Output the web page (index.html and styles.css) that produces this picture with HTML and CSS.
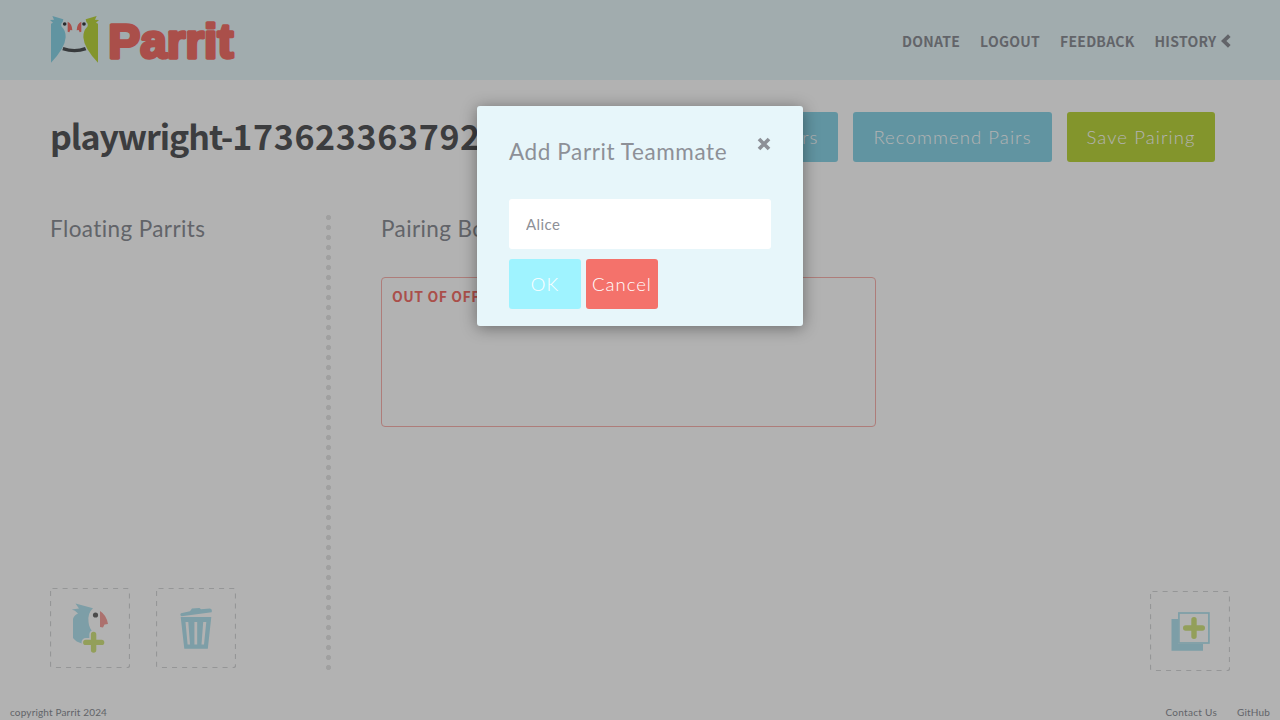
FILE: index.html
```html
<!DOCTYPE html>
<html lang="en">
<head>
<meta charset="utf-8">
<title>Parrit</title>
<link rel="stylesheet" href="styles.css">
</head>
<body>
<div class="app">
  <header class="header">
    <svg class="logo" viewBox="30 45 600 150" role="img" aria-label="Parrit">
      <path d="M37 48L70 58L68 66Q61 72 65 80Q78 92 77 112Q75 145 33 188V71L39 68L30 60L42 59Z" fill="#8bd5e7"/>
      <path d="M170 48L137 58L139 66Q146 72 142 80Q129 92 130 112Q132 145 174 188V71L168 68L177 60L165 59Z" fill="#bcd640"/>
      <path d="M70 141Q104 153 135 141L139 151Q104 163 67 151Z" fill="#505357"/>
      <path d="M83 65Q96 70 97 91L91 90L88 97L83 95Z" fill="#f4726b"/>
      <path d="M124 65Q111 70 110 91L116 90L119 97L124 95Z" fill="#f4726b"/>
      <circle cx="74" cy="72" r="5.5" fill="#3b3d40"/>
      <circle cx="132" cy="72" r="5.5" fill="#3b3d40"/>
      <text class="wordmark" x="205" y="175" textLength="375" lengthAdjust="spacingAndGlyphs">Parrit</text>
    </svg>
    <nav class="nav">
      <a class="nav-donate">DONATE</a>
      <a class="nav-logout">LOGOUT</a>
      <a class="nav-feedback">FEEDBACK</a>
      <a class="nav-history">HISTORY<svg class="chevron" viewBox="0 0 10 14"><path d="M8.3 1.6L2.7 7L8.3 12.4" fill="none" stroke="currentColor" stroke-width="3.8"/></svg></a>
    </nav>
  </header>
  <div class="toolbar">
    <h1 class="project"><span class="project-name">playwright-</span><span class="project-id">173623363792</span></h1>
    <div class="actions">
      <button class="btn btn-reset">Reset Pairs</button>
      <button class="btn btn-recommend">Recommend Pairs</button>
      <button class="btn btn-save">Save Pairing</button>
    </div>
  </div>
  <main class="workspace">
    <section class="floating">
      <h2 class="section-title">Floating Parrits</h2>
      <div class="tiles">
        <svg class="tile" viewBox="0 0 80 80">
          <rect class="tile-edge" x=".5" y=".5" width="79" height="79" rx="2"/>
          <g class="glyph">
            <path fill="#8bd5e7" d="M25.5 15.5L43 20.3Q37.5 25 38.5 34Q39 40 43 44V54L32 55.5Q26 54 23 50V31Q24 27 28 25.5Q25 22 21.8 21.5L29 20.5Z"/>
            <circle cx="45.5" cy="27" r="2.6" fill="#222"/>
            <path fill="#f4726b" d="M50 23Q56.5 27 58 36L54.5 36.5L53 39.5L50 39Z"/>
            <path d="M43.6 46.4V62M35.8 54.4H51.6" fill="none" stroke="#fff" stroke-width="8.6" stroke-linecap="round"/>
            <path d="M43.6 46.4V62M35.8 54.4H51.6" fill="none" stroke="#bcd640" stroke-width="5.4" stroke-linecap="round"/>
          </g>
        </svg>
        <svg class="tile" viewBox="0 0 80 80">
          <rect class="tile-edge" x=".5" y=".5" width="79" height="79" rx="2"/>
          <g class="glyph">
            <path fill="#8bd5e7" d="M25 25.2L34 23.2L36 20.5L43.5 19.9L45 21.3L54 20.5Q56.6 21.3 55.6 24.2L25.5 28.3Q23.5 27 25 25.2Z"/>
            <path fill="#8bd5e7" fill-rule="evenodd" d="M24.7 29H55.3L51.8 60.7H28.3ZM29.5 34L31.6 56.5H34L32.3 34ZM38.4 34V56.5H41.2V34ZM47.2 34L45.5 56.5H48L50.3 34Z"/>
          </g>
        </svg>
      </div>
    </section>
    <div class="divider"></div>
    <section class="pairing">
      <h2 class="section-title">Pairing Boards</h2>
      <div class="board"><span class="board-name">OUT OF OFFICE</span></div>
    </section>
    <aside class="add-board">
      <svg class="tile" viewBox="0 0 80 80">
        <rect class="tile-edge" x=".5" y=".5" width="79" height="79" rx="2"/>
        <g class="glyph">
          <path fill="#8bd5e7" d="M21.5 28H28V53H53V59.8H21.5Z"/>
          <rect x="28.9" y="22" width="30" height="30" fill="none" stroke="#8bd5e7" stroke-width="1.7"/>
          <path d="M44 28.7V45.3M35.7 37H52.3" fill="none" stroke="#bcd640" stroke-width="5.4" stroke-linecap="round"/>
        </g>
      </svg>
    </aside>
  </main>
  <footer class="footer">
    <span class="copyright">copyright Parrit 2024</span>
    <span class="links"><a class="contact">Contact Us</a><a class="github">GitHub</a></span>
  </footer>
</div>
<div class="overlay">
  <form class="modal">
    <div class="modal-head">
      <h2 class="modal-title">Add Parrit Teammate</h2>
      <svg class="close" viewBox="0 0 14 14"><path d="M2 2L12 12M12 2L2 12" stroke="currentColor" stroke-width="3.7"/></svg>
    </div>
    <input class="name-input" type="text" value="Alice">
    <div class="modal-actions">
      <button type="button" class="modal-btn ok">OK</button>
      <button type="button" class="modal-btn cancel">Cancel</button>
    </div>
  </form>
</div>
</body>
</html>
```
FILE: styles.css
```css
* { box-sizing: border-box; }
body { margin: 0; background: #fff; color: #8d9097; font-family: Lato, "Open Sans", sans-serif; }
h1, h2 { margin: 0; }
button { border: 0; padding: 0; font-family: inherit; }
.app { height: 720px; display: flex; flex-direction: column; overflow: hidden; }
.header { height: 80px; flex: none; background: #e7f6f9; display: flex; justify-content: space-between; padding: 15px 49px 0 50px; }
.logo { width: 200px; height: 50px; overflow: visible; }
.wordmark { font: 700 142px "Liberation Sans", sans-serif; fill: #f4726b; stroke: #f4726b; stroke-width: 10; stroke-linejoin: round; }
.nav { display: flex; gap: 20px; height: 51px; align-items: center; font: 700 14px/20px "Noto Sans CJK SC", sans-serif; letter-spacing: .25px; color: #8d9097; }
.nav a { white-space: nowrap; display: flex; align-items: center; }
.chevron { width: 10px; height: 14px; margin-left: 4.5px; }
.toolbar { height: 82px; flex: none; display: flex; justify-content: space-between; padding: 32px 65px 0 50px; }
.project { width: 440px; white-space: nowrap; font: 700 34px/48px "Noto Sans CJK SC", sans-serif; color: #57585b; }
.project-name { letter-spacing: -1.1px; }
.project-id { letter-spacing: .65px; }
.actions { display: flex; gap: 15px; }
.btn { height: 50px; border-radius: 3px; background: #8bd5e7; color: #fff; font-size: 18.5px; font-weight: 300; letter-spacing: 1.1px; white-space: nowrap; }
.btn-reset { width: 138px; }
.btn-recommend { width: 199px; }
.btn-save { width: 148px; background: #bcd640; }
.workspace { flex: 1; display: flex; padding: 53px 50px 0; }
.floating { width: 276px; height: 453px; display: flex; flex-direction: column; justify-content: space-between; }
.section-title { font-size: 22.5px; line-height: 27px; font-weight: 400; letter-spacing: .4px; color: #8d9097; white-space: nowrap; }
.tiles { display: flex; gap: 26px; }
.tile { width: 80px; height: 80px; display: block; }
.tile-edge { fill: none; stroke: #d6d7d8; stroke-width: 1.2; stroke-dasharray: 5 5.1; }
.glyph { opacity: .65; }
.divider { width: 5px; height: 460px; background: radial-gradient(circle at 2.5px 2.5px, #e6e6e6 2.2px, transparent 2.9px) 0 0 / 5px 10px; }
.pairing { width: 545px; padding-left: 50px; }
.board { width: 495px; height: 150px; margin-top: 35px; padding: 8px 10px; border: 1px solid #f9b3af; border-radius: 4px; }
.board-name { display: block; font: 700 14px/20px "Noto Sans CJK SC", sans-serif; letter-spacing: .55px; color: #f4726b; }
.add-board { margin-left: auto; padding-top: 376px; }
.footer { height: 15px; flex: none; display: flex; justify-content: space-between; padding: 0 10px; font-size: 10px; line-height: 14px; letter-spacing: .16px; }
.links { display: flex; gap: 20px; }
.contact { letter-spacing: .3px; }
.overlay { position: absolute; inset: 0; background: rgba(0, 0, 0, .3); display: flex; justify-content: center; align-items: flex-start; padding-top: 106px; }
.modal { width: 326px; height: 220px; padding: 30px 32px 0; border-radius: 3px; background: #e7f6fa; box-shadow: 0 2px 16px rgba(0, 0, 0, .4); }
.modal-head { display: flex; justify-content: space-between; height: 63px; }
.modal-title { font-size: 22.5px; line-height: 31px; font-weight: 400; letter-spacing: .6px; color: #8d9097; white-space: nowrap; }
.close { width: 14px; height: 14px; margin-top: 1px; }
.name-input { display: block; width: 262px; height: 50px; border: 0; border-radius: 3px; padding: 0 17px 1px; background: #fff; color: #8d9097; font: 400 15px Lato, sans-serif; letter-spacing: .4px; outline: 0; }
.modal-actions { display: flex; gap: 5px; margin-top: 10px; }
.modal-btn { width: 72px; height: 50px; border-radius: 3px; color: #fff; font-size: 18.5px; font-weight: 300; letter-spacing: 1px; }
.ok { background: #9ff3ff; }
.cancel { background: #f4726b; }
```
